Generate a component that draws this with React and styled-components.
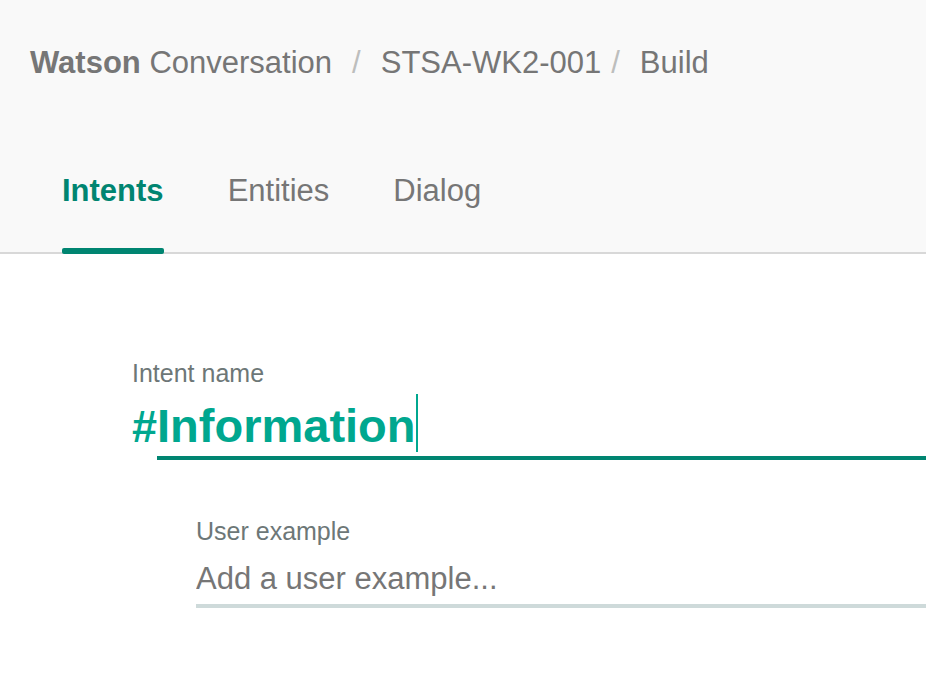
import React, { useState } from "react";
import styled, { createGlobalStyle } from "styled-components";

const GlobalStyle = createGlobalStyle`
  * { box-sizing: border-box; }
  body {
    margin: 0;
    background: #fff;
    color: #767676;
    font-family: "Liberation Sans", Arial, sans-serif;
    overflow-x: hidden;
  }
`;

const Header = styled.header`
  background: #f9f9f9;
  border-bottom: 2px solid #d8d8d8;
`;

const Breadcrumb = styled.nav`
  display: flex;
  align-items: center;
  padding: 43px 30px 0;
  font-size: 31px;
  line-height: 40px;
  white-space: nowrap;
`;

const Crumb = styled.a`
  color: inherit;
  text-decoration: none;
`;

const Separator = styled.span`
  padding: ${(p) => (p.$tight ? "0 20px 0 10px" : "0 20px")};
  color: #bdbebd;
`;

const Tabs = styled.nav`
  display: flex;
  gap: 64px;
  margin-bottom: -2px;
  padding: 81px 62px 0;
`;

const Tab = styled.a`
  position: relative;
  padding: 7px 0 43px;
  color: ${(p) => (p.$active ? "#008571" : "inherit")};
  font-size: 31px;
  font-weight: ${(p) => (p.$active ? 700 : 400)};
  line-height: 40px;
  text-decoration: none;

  &::after {
    content: "";
    display: ${(p) => (p.$active ? "block" : "none")};
    position: absolute;
    right: 0;
    bottom: 0;
    left: 0;
    height: 6px;
    border-radius: 2px;
    background: #008571;
  }
`;

const Form = styled.form`
  padding: 103px 0 72px 132px;
`;

const Label = styled.label`
  display: block;
  color: #6d7777;
  font-size: 25px;
  line-height: 32px;
`;

const NameRow = styled.div`
  display: flex;
  align-items: baseline;
  color: #00a78f;
  font-size: 47px;
  font-weight: 700;
`;

const Hash = styled.span`
  font-size: 45px;
`;

const NameField = styled.div`
  display: flex;
  flex: 1;
  align-items: center;
  min-width: 0;
  height: 71px;
  border-bottom: 4px solid #008571;
`;

const NameInput = styled.input`
  field-sizing: content;
  min-width: 0;
  height: 67px;
  padding: 6px 0 0;
  border: 0;
  outline: 0;
  background: transparent;
  color: inherit;
  font: inherit;

  &:focus + span { display: none; }
`;

const Caret = styled.span`
  width: 2px;
  height: 58px;
  background: #00a78f;
`;

const ExampleField = styled.div`
  padding: 55px 0 0 64px;
`;

const ExampleInput = styled.input`
  display: block;
  width: 100%;
  height: 61px;
  padding: 6px 0 0;
  border: 0;
  border-bottom: 4px solid #cedada;
  border-radius: 0;
  outline: 0;
  background: transparent;
  color: inherit;
  font: inherit;
  font-size: 31px;

  &::placeholder { color: #767676; opacity: 1; }
`;

export default function App() {
  const [name, setName] = useState("Information");
  return (
    <>
      <GlobalStyle />
      <Header>
        <Breadcrumb aria-label="Breadcrumb">
          <Crumb href="#home"><b>Watson</b> Conversation</Crumb>
          <Separator>/</Separator>
          <Crumb href="#workspace">STSA-WK2-001</Crumb>
          <Separator $tight>/</Separator>
          <Crumb href="#build">Build</Crumb>
        </Breadcrumb>
        <Tabs aria-label="Workspace">
          <Tab href="#intents" $active aria-current="page">Intents</Tab>
          <Tab href="#entities">Entities</Tab>
          <Tab href="#dialog">Dialog</Tab>
        </Tabs>
      </Header>
      <Form>
        <Label htmlFor="name">Intent name</Label>
        <NameRow>
          <Hash>#</Hash>
          <NameField>
            <NameInput id="name" value={name} onChange={(e) => setName(e.target.value)} />
            <Caret />
          </NameField>
        </NameRow>
        <ExampleField>
          <Label htmlFor="example">User example</Label>
          <ExampleInput id="example" placeholder="Add a user example..." />
        </ExampleField>
      </Form>
    </>
  );
}
